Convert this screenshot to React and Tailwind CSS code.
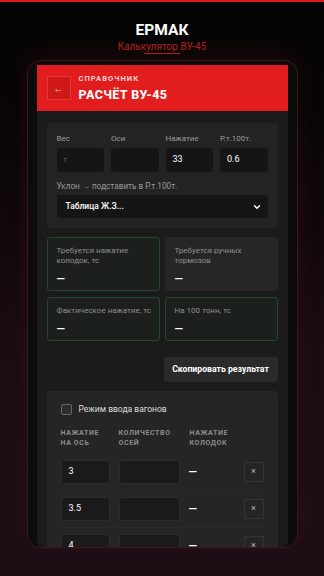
import { ChevronDown } from 'lucide-react';

const inputs = [
  { label: 'Вес', value: '', placeholder: 'т' },
  { label: 'Оси', value: '', placeholder: '' },
  { label: 'Нажатие', value: '33', placeholder: '' },
  { label: 'Р.т.100т.', value: '0.6', placeholder: '' },
];

const rows = ['3', '3.5', '4'];

const ResultCard = ({ label, green, tall }) => (
  <div
    className={`rounded-[3px] border px-[9px] pt-[8px] ${tall ? 'h-[54px]' : 'h-[44px]'} ${
      green ? 'border-[#23472c] bg-[#1b201c]' : 'border-[#262626] bg-[#262626]'
    }`}
  >
    <p className="text-[8px] leading-[10px] text-[#8f8f8f]">{label}</p>
    <p className={`text-[11px] font-bold leading-[12px] text-white ${tall ? 'mt-[7px]' : 'mt-[7px]'}`}>—</p>
  </div>
);

export default function App() {
  return (
    <div className="flex h-[576px] w-[324px] flex-col items-center overflow-hidden bg-[linear-gradient(180deg,#050505_0%,#070506_18%,#1a0c13_62%,#1d0e16_100%)] font-['Roboto','Noto_Sans',sans-serif]">
      <div className="h-[2px] w-full bg-[#d81b1b]" />
      <h1 className="mt-[19px] text-[15.5px] font-bold leading-[18px] text-white">ЕРМАК</h1>
      <p className="mt-[1px] text-[10px] leading-[13px] text-[#b3211f]">Калькулятор ВУ-45</p>
      <div className="h-px w-[36px] bg-[#b3211f]" />

      {/* phone frame */}
      <div className="mt-[6px] h-[488px] w-[271px] shrink-0 rounded-[14px] border border-[#3e161b] bg-[#0b0b0b] px-[9px] pt-[4px] shadow-[0_-6px_24px_rgba(190,30,30,0.12)]">
        <div className="h-[482px] overflow-hidden rounded-b-[6px] bg-[#1b1b1b]">
          {/* header */}
          <div className="flex h-[46px] items-center gap-[8px] bg-[#e11d1d] px-[10px]">
            <button className="flex h-[24px] w-[24px] items-center justify-center border border-[#f05050]/60 bg-[#cf1818] text-[10px] text-white">
              ←
            </button>
            <div className="flex flex-col">
              <span className="text-[7.5px] font-bold leading-[9px] tracking-[0.14em] text-[#ffd6d6]">СПРАВОЧНИК</span>
              <span className="mt-[4px] text-[12.5px] font-extrabold leading-[15px] tracking-[0.03em] text-white">РАСЧЁТ ВУ-45</span>
            </div>
          </div>

          <div className="px-[10px] pt-[12px]">
            {/* inputs */}
            <div className="rounded-[3px] bg-[#232323] p-[10px]">
              <div className="grid grid-cols-4 gap-x-[7px]">
                {inputs.map((f) => (
                  <div key={f.label}>
                    <p className="text-[8px] leading-[12px] text-[#9b9b9b]">{f.label}</p>
                    <div className="mt-[3px] flex h-[24px] items-center rounded-[3px] bg-[#151515] px-[7px] text-[9px]">
                      {f.value ? (
                        <span className="text-white">{f.value}</span>
                      ) : (
                        <span className="text-[7px] text-[#6e6e6e]">{f.placeholder}</span>
                      )}
                    </div>
                  </div>
                ))}
              </div>
              <p className="mt-[8px] text-[8.2px] leading-[12px] text-[#9b9b9b]">Уклон → подставить в Р.т.100т.</p>
              <div className="mt-[3px] flex h-[23px] items-center justify-between rounded-[3px] bg-[#151515] pl-[9px] pr-[6px]">
                <span className="text-[8.5px] font-medium text-white">Таблица Ж.З...</span>
                <ChevronDown size={10} strokeWidth={3.5} className="text-white" />
              </div>
            </div>

            {/* results */}
            <div className="mt-[9px] grid grid-cols-2 gap-x-[5px] gap-y-[6px]">
              <ResultCard
                tall
                green
                label={
                  <>
                    Требуется нажатие
                    <br />
                    колодок, тс
                  </>
                }
              />
              <ResultCard
                tall
                label={
                  <>
                    Требуется ручных
                    <br />
                    тормозов
                  </>
                }
              />
              <ResultCard green label={<span className="whitespace-nowrap">Фактическое нажатие, тс</span>} />
              <ResultCard green label="На 100 тонн, тс" />
            </div>

            <div className="mt-[16px] flex justify-end">
              <button className="h-[25px] w-[114px] rounded-[3px] bg-[#2a2a2a] text-[8.7px] font-bold text-white">
                Скопировать результат
              </button>
            </div>

            {/* wagons */}
            <div className="mt-[9px] rounded-[3px] bg-[#252525] px-[14px] pt-[12px]">
              <div className="flex items-center gap-[7px]">
                <div className="h-[11px] w-[11px] rounded-[2px] border border-[#6b6b6b] bg-[#2c2c2c]" />
                <span className="text-[8.5px] text-[#dcdcdc]">Режим ввода вагонов</span>
              </div>

              <div className="mt-[12px] flex text-[7px] font-bold leading-[10px] tracking-[0.09em] text-[#8d8d8d]">
                <div className="w-[58px]">
                  НАЖАТИЕ
                  <br />
                  НА ОСЬ
                </div>
                <div className="w-[71px]">
                  КОЛИЧЕСТВО
                  <br />
                  ОСЕЙ
                </div>
                <div>
                  НАЖАТИЕ
                  <br />
                  КОЛОДОК
                </div>
              </div>

              <div className="mt-[6px]">
                {rows.map((r) => (
                  <div key={r} className="flex items-center border-b border-[#2a2a2a] py-[6px]">
                    <div className="flex h-[24px] w-[49px] items-center rounded-[3px] border border-[#2c2c2c] bg-[#1a1a1a] px-[7px] text-[9px] text-white">
                      {r}
                    </div>
                    <div className="ml-[9px] h-[24px] w-[61px] rounded-[3px] border border-[#2c2c2c] bg-[#1a1a1a]" />
                    <span className="ml-[9px] text-[11px] font-bold text-white">—</span>
                    <div className="ml-auto flex h-[20px] w-[20px] items-center justify-center border border-[#343434] text-[9px] text-[#bdbdbd]">
                      ×
                    </div>
                  </div>
                ))}
              </div>
            </div>
          </div>
        </div>
      </div>
    </div>
  );
}
